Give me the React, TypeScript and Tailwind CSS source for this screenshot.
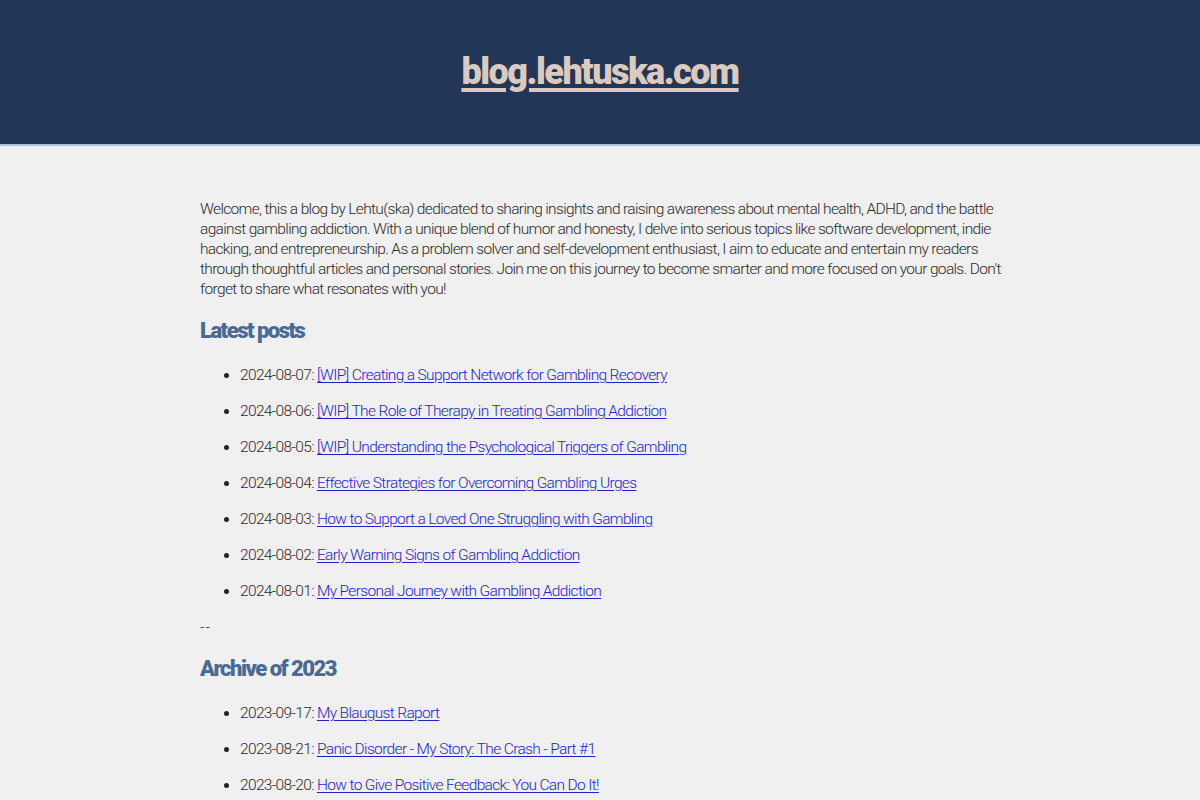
const posts2024 = [
  ['2024-08-07', '[WIP] Creating a Support Network for Gambling Recovery'],
  ['2024-08-06', '[WIP] The Role of Therapy in Treating Gambling Addiction'],
  ['2024-08-05', '[WIP] Understanding the Psychological Triggers of Gambling'],
  ['2024-08-04', 'Effective Strategies for Overcoming Gambling Urges'],
  ['2024-08-03', 'How to Support a Loved One Struggling with Gambling'],
  ['2024-08-02', 'Early Warning Signs of Gambling Addiction'],
  ['2024-08-01', 'My Personal Journey with Gambling Addiction'],
];

const posts2023 = [
  ['2023-09-17', 'My Blaugust Raport'],
  ['2023-08-21', 'Panic Disorder - My Story: The Crash - Part #1'],
  ['2023-08-20', 'How to Give Positive Feedback: You Can Do It!'],
  ['2023-08-19', 'Why I Write'],
];

const intro = [
  'Welcome, this a blog by Lehtu(ska) dedicated to sharing insights and raising awareness about mental health, ADHD, and the battle',
  'against gambling addiction. With a unique blend of humor and honesty, I delve into serious topics like software development, indie',
  'hacking, and entrepreneurship. As a problem solver and self-development enthusiast, I aim to educate and entertain my readers',
  "through thoughtful articles and personal stories. Join me on this journey to become smarter and more focused on your goals. Don't",
  'forget to share what resonates with you!',
];

function PostList({ posts }: { posts: string[][] }) {
  return (
    <ul className="list-disc pl-10 mt-5">
      {posts.map(([date, title]) => (
        <li key={date} className="leading-5 mb-4 marker:text-[#222]">
          {date}:{' '}
          <a href="#" className="text-[#1f1fcc] underline underline-offset-2">
            {title}
          </a>
        </li>
      ))}
    </ul>
  );
}

function Heading({ children }: { children: string }) {
  return (
    <h2 className="mt-[18px] text-[22px] leading-7 font-black tracking-[-1.5px] text-[#4a6a96] font-['Roboto',sans-serif]">
      {children}
    </h2>
  );
}

export default function App() {
  return (
    <div className="min-h-screen bg-[#f0f0f0] text-[#2a2a2a] font-['Roboto',sans-serif] font-light text-[15.5px] tracking-[-0.65px]">
      <header className="h-[146px] bg-[#223758] border-b-2 border-[#a9c4dc] flex items-center justify-center">
        <a
          href="#"
          className="text-[36px] font-black text-[#dccabf] underline decoration-[4px] underline-offset-4 tracking-[-1.5px]"
        >
          blog.lehtuska.com
        </a>
      </header>
      <main className="w-[800px] mx-auto pt-[53px]">
        <p className="leading-5">
          {intro.map((line, i) => (
            <span key={i} className="block whitespace-nowrap">
              {line}
            </span>
          ))}
        </p>
        <Heading>Latest posts</Heading>
        <PostList posts={posts2024} />
        <p className="leading-5 tracking-[1px]">--</p>
        <Heading>Archive of 2023</Heading>
        <PostList posts={posts2023} />
      </main>
    </div>
  );
}
